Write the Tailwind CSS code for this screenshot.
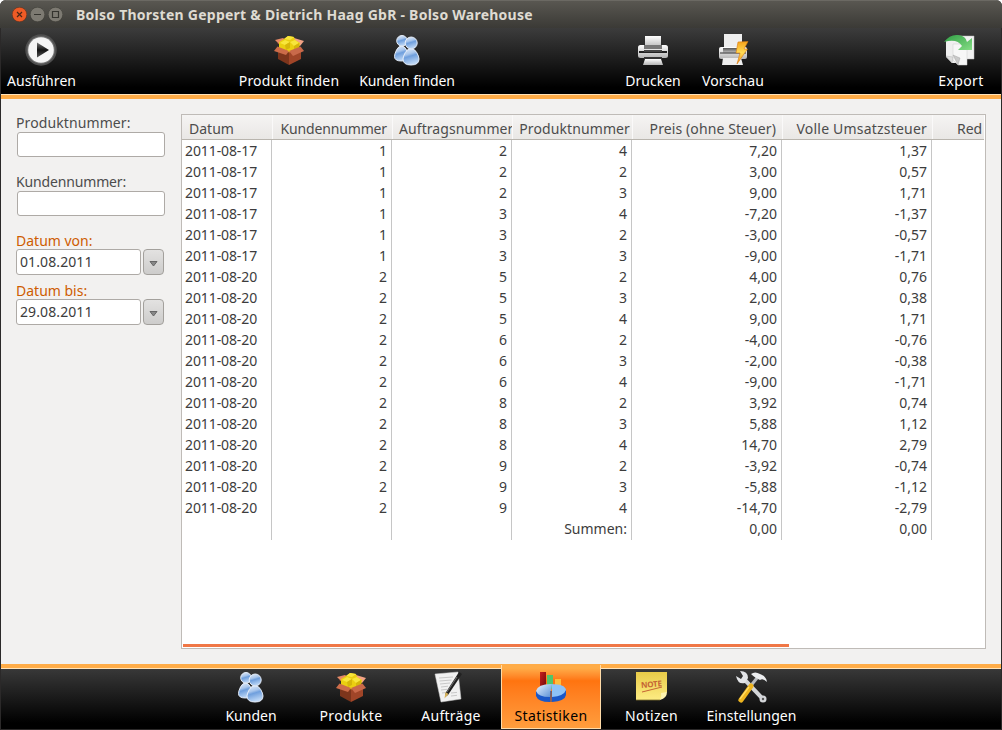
<!DOCTYPE html>
<html lang="de">
<head>
<meta charset="utf-8">
<title>Bolso Warehouse</title>
<script src="https://cdn.jsdelivr.net/npm/@tailwindcss/browser@4"></script>
</head>
<body class="bg-white overflow-hidden">
<svg class="absolute size-0" aria-hidden="true">
  <defs>
    <linearGradient id="blue" x1="0" y1="0" x2="1" y2="1"><stop offset="0" stop-color="#f4f9ff"/><stop offset=".45" stop-color="#a9c8ee"/><stop offset="1" stop-color="#5c92d6"/></linearGradient>
    <linearGradient id="ball" x1="0" y1="0" x2=".3" y2="1"><stop offset="0" stop-color="#e9f1fb"/><stop offset=".4" stop-color="#a9c6ec"/><stop offset=".55" stop-color="#6f9fdd"/><stop offset="1" stop-color="#bcd6f5"/></linearGradient>
    <linearGradient id="metal" x1="0" y1="0" x2="0" y2="1"><stop offset="0" stop-color="#ffffff"/><stop offset="1" stop-color="#b4b4b4"/></linearGradient>
    <linearGradient id="dark" x1="0" y1="0" x2="0" y2="1"><stop offset="0" stop-color="#555"/><stop offset=".5" stop-color="#999"/><stop offset="1" stop-color="#ddd"/></linearGradient>
    <linearGradient id="bolt" x1="0" y1="0" x2="0" y2="1"><stop offset="0" stop-color="#f5a21b"/><stop offset=".5" stop-color="#ffdc55"/><stop offset="1" stop-color="#ef8a12"/></linearGradient>
    <linearGradient id="green" x1="0" y1="0" x2="1" y2="1"><stop offset="0" stop-color="#2f9e44"/><stop offset="1" stop-color="#85dd85"/></linearGradient>
    <linearGradient id="note" x1="0" y1="0" x2="0" y2="1"><stop offset="0" stop-color="#e9cb48"/><stop offset="1" stop-color="#fdec83"/></linearGradient>
    <linearGradient id="play" x1="0" y1="0" x2="0" y2="1"><stop offset="0" stop-color="#777"/><stop offset=".5" stop-color="#111"/><stop offset="1" stop-color="#555"/></linearGradient>
    <linearGradient id="red" x1="0" y1="0" x2="1" y2="1"><stop offset="0" stop-color="#c81e1e"/><stop offset="1" stop-color="#6e0808"/></linearGradient>
    <symbol id="people" viewBox="0 0 32 32">
      <g fill="url(#ball)" stroke="#e6eefa" stroke-width="1">
        <path d="M10.500 12q-3 0-5 4t-2 6.500q0 4.500 7 4.500t7-4.500q0-2.500-2-6.500t-5-4"/><circle cx="11" cy="6.800" r="5.300"/>
        <path d="M20 14.500q-3.500 0-5.700 4t-2.300 6.500q0 6 8 6t8-6q0-2.500-2.300-6.500t-5.700-4"/><circle cx="20.200" cy="9" r="6"/>
      </g>
    </symbol>
    <symbol id="box" viewBox="0 0 32 32">
      <path d="M4 9 16 5 28 9 16 17Z" fill="#8e3c20"/>
      <path d="M21 4 31 7 27 12 19 7Z" fill="#f2a385"/><path d="M10 4 2 6 6 10 14 7Z" fill="#e58a67"/>
      <path d="M6 8 11 5 15 2 21 3 22 6 27 9 26 15 16 19 6 14Z" fill="#ebcf10"/>
      <path d="M11 5 15 2 21 3 17 6ZM7 9l5-3 5 2-5 3ZM17 8l5-2 4 3-5 3Z" fill="#f8e63c"/><path d="m12 11 5-3 0 6-4 2ZM21 12l5-3v5l-5 3Z" fill="#d6b60a"/>
      <path d="M5 14 16 18.500V31L5 25Z" fill="#7d351c"/><path d="M16 18.500 28 14V25L16 31Z" fill="#a04528"/>
      <path d="M4.500 12.500 16 17 13 21 1 17Z" fill="#cc6c49"/><path d="M27.500 12.500 16 17 20 22 31 17Z" fill="#c9694a"/>
    </symbol>
  </defs>
</svg>
<div id="app" class="w-[1002px] h-[730px] flex flex-col rounded-t-[6px] overflow-hidden bg-[#2b2929] px-px pb-px font-['Noto_Sans',sans-serif] text-[14px] leading-5 text-[#3c3c3c]">
  <header class="h-7 shrink-0 -mx-px px-3 flex items-center bg-linear-to-b from-[#595751] to-[#3b3a36] border-t border-[#6b6963]">
    <div class="flex gap-[3px] w-[64px]">
      <svg class="size-[15px]" viewBox="0 0 15 15"><circle cx="7.500" cy="7.500" r="7.300" fill="#ee5b26" stroke="#4a2a1c" stroke-width=".5"/><path d="m5 5 5 5m0-5-5 5" stroke="#4b2717" stroke-width="1.200"/></svg>
      <svg class="size-[15px]" viewBox="0 0 15 15"><circle cx="7.500" cy="7.500" r="7.300" fill="#7d7a72" stroke="#35342f" stroke-width=".5"/><path d="M4 7.500h7" stroke="#35342f" stroke-width="1.200"/></svg>
      <svg class="size-[15px]" viewBox="0 0 15 15"><circle cx="7.500" cy="7.500" r="7.300" fill="#7d7a72" stroke="#35342f" stroke-width=".5"/><path d="M4.500 4.500h6v6h-6z" fill="none" stroke="#35342f" stroke-width="1.200"/></svg>
    </div>
    <h1 class="font-bold text-[#dfdbd2] whitespace-nowrap tracking-[0.25px]">Bolso Thorsten Geppert &amp; Dietrich Haag GbR - Bolso Warehouse</h1>
  </header>

  <nav class="h-[66px] shrink-0 flex pt-1.5 bg-linear-to-b/srgb from-[#3c3c3c] to-black to-90% text-white whitespace-nowrap">
    <div class="w-[81px] flex flex-col items-center gap-[5px]">
      <svg class="size-8 -ml-0.5" viewBox="0 0 32 32"><circle cx="16" cy="16" r="15.700" fill="#505050"/><circle cx="16" cy="16" r="13.800" fill="#777"/><circle cx="16" cy="16" r="12.800" fill="#f4f4f4"/><path d="M12 8.500v15L24 16Z" fill="url(#play)"/></svg>
      <span class="tracking-[0.08px]">Ausführen</span>
    </div>
    <div class="w-[118px] ml-[148px] flex flex-col items-center gap-[5px]"><svg class="size-8 -ml-px"><use href="#box"/></svg><span class="tracking-[0.17px]">Produkt finden</span></div>
    <div class="w-[118px] flex flex-col items-center gap-[5px]"><svg class="size-8 -ml-px"><use href="#people"/></svg><span class="tracking-[-0.1px]">Kunden finden</span></div>
    <div class="w-20 ml-[147px] flex flex-col items-center gap-[5px]">
      <svg class="size-8 -ml-px" viewBox="0 0 32 32"><path d="M8 2h16v12H8z" fill="url(#metal)"/><rect x="1" y="11" width="30" height="13" rx="2.500" fill="url(#metal)"/><path d="M7 11h18v4H7z" fill="#777"/><path d="M2 18h28" stroke="#222" stroke-width="2"/><path d="M7 16h18v2H7z" fill="#444"/><path d="M7 23h18v2H7z" fill="#333"/><path d="M8 25h16l2 6H6Z" fill="url(#metal)"/></svg>
      <span>Drucken</span>
    </div>
    <div class="w-20 flex flex-col items-center gap-[5px]">
      <svg class="size-8" viewBox="0 0 32 32"><path d="M7 0h18v15H7z" fill="#eee"/><rect x="2" y="13" width="28" height="12" rx="2" fill="url(#metal)"/><path d="M6 14h19v6H6z" fill="url(#dark)"/><path d="M3 19h26" stroke="#333" stroke-width="1"/><path d="M6 24h18l2 7H5Z" fill="#eee"/><path d="M21 8 31 7.500 27 15h3.500L20 30l3-11h-4Z" fill="url(#bolt)" stroke="#d97b10" stroke-width=".6"/></svg>
      <span class="tracking-[0.12px]">Vorschau</span>
    </div>
    <div class="w-20 ml-auto flex flex-col items-center gap-[5px]">
      <svg class="size-8 -ml-1" viewBox="0 0 32 32"><path d="M13 2h18v23H19l-6-6Z" fill="#f2f2f2" stroke="#bbb" stroke-width=".5"/><path d="M3 6h14v23H9l-6-6Z" fill="#efefef"/><path d="M10 10h14v21H15l-5-5Z" fill="#f7f7f7" stroke="#ccc" stroke-width=".5"/><path d="m3 22 7 1-1 6Z" fill="#ddd" stroke="#aaa" stroke-width=".4"/><path d="m10 21 7 3-2 7Z" fill="#c9c9c9" stroke="#999" stroke-width=".4"/><path d="M1 8Q7 0 15 1q8 1 9 7l5-4v12H15l4-4Q14 4 1 8Z" fill="url(#green)"/></svg>
      <span class="tracking-[0.4px]">Export</span>
    </div>
  </nav>
  <div class="h-[5px] shrink-0 bg-[#ffac47] border-t border-[#ffe3b9]"></div>

  <main class="h-[565px] shrink-0 bg-[#f2f1f0] flex">
    <aside class="w-[180px] pl-[15px] pt-[14px] text-[#4c4c4c]">
      <div class="h-[59px]"><label class="block h-[19px] tracking-[0.1px]">Produktnummer:</label><div class="w-[148px] h-[25px] ml-px bg-white border border-[#aeaaa6] rounded-[3px]"></div></div>
      <div class="h-[59px]"><label class="block h-[19px] tracking-[-0.15px]">Kundennummer:</label><div class="w-[148px] h-[25px] ml-px bg-white border border-[#aeaaa6] rounded-[3px]"></div></div>
      <div class="h-[50px]"><label class="block h-[18px] text-[#ce5c00]">Datum von:</label>
        <div class="flex gap-0.5"><div class="w-[125px] h-[26px] pl-[3px] leading-[24px] bg-white border border-[#aeaaa6] rounded-[3px] text-[#3c3c3c] tracking-[0.1px]">01.08.2011</div><div class="w-[21px] h-[26px] flex items-center justify-center border border-[#a3a09c] rounded-[4px] bg-linear-to-b from-[#e3e2e1] to-[#cdcccb]"><svg class="w-[9px] h-[6px] mt-1" viewBox="0 0 9 6"><path d="M1 .5h7L4.500 5Z" fill="#888" stroke="#666"/></svg></div></div></div>
      <div class="h-[50px]"><label class="block h-[18px] text-[#ce5c00]">Datum bis:</label>
        <div class="flex gap-0.5"><div class="w-[125px] h-[26px] pl-[3px] leading-[24px] bg-white border border-[#aeaaa6] rounded-[3px] text-[#3c3c3c] tracking-[0.1px]">29.08.2011</div><div class="w-[21px] h-[26px] flex items-center justify-center border border-[#a3a09c] rounded-[4px] bg-linear-to-b from-[#e3e2e1] to-[#cdcccb]"><svg class="w-[9px] h-[6px] mt-1" viewBox="0 0 9 6"><path d="M1 .5h7L4.500 5Z" fill="#888" stroke="#666"/></svg></div></div></div>
    </aside>
    <section class="w-[805px] h-[535px] mt-[15px] bg-white border border-[#bfbbb7] flex flex-col overflow-hidden">
      <div class="h-[25px] shrink-0 flex mr-px bg-linear-to-b from-[#f5f4f3] to-[#e9e7e5] border-b border-[#b9b5ae] text-[#4c4c4c] leading-[27px] whitespace-nowrap text-right">
        <div class="w-[91px] shrink-0 border-r border-[#faf9f9] pl-[7px] text-left">Datum</div>
        <div class="w-[120px] shrink-0 border-r border-[#faf9f9] pr-[5px] tracking-[-0.15px]">Kundennummer</div>
        <div class="w-[120px] shrink-0 border-r border-[#faf9f9] pl-[6px] text-left overflow-hidden tracking-[0.08px]">Auftragsnummer</div>
        <div class="w-[120px] shrink-0 border-r border-[#faf9f9] pr-[2px] tracking-[0.1px]">Produktnummer</div>
        <div class="w-[150px] shrink-0 border-r border-[#faf9f9] pr-[6px] tracking-[0.1px]">Preis (ohne Steuer)</div>
        <div class="w-[150px] shrink-0 border-r border-[#faf9f9] pr-[5px] tracking-[0.2px]">Volle Umsatzsteuer</div>
        <div class="pl-[24px]">Red</div>
      </div>
      <div id="rows" class="h-[400px] shrink-0"></div>
      <div class="mt-auto mb-px ml-px w-[606px] h-[3px] bg-[#f07746]"></div>
    </section>
  </main>

  <div class="h-[5px] shrink-0 bg-[#ffac47] border-b border-[#ffe3b9]"></div>
  <footer class="h-[60px] shrink-0 flex pl-[200px] bg-linear-to-b/srgb from-[#383838] to-black to-90% text-white whitespace-nowrap">
    <div class="w-[100px] pt-0.5 flex flex-col items-center gap-[3px]"><svg class="size-8"><use href="#people"/></svg><span>Kunden</span></div>
    <div class="w-[100px] pt-0.5 flex flex-col items-center gap-[3px]"><svg class="size-8"><use href="#box"/></svg><span class="tracking-[0.35px]">Produkte</span></div>
    <div class="w-[100px] pt-0.5 flex flex-col items-center gap-[3px]">
      <svg class="size-8 -ml-1" viewBox="0 0 32 32"><path d="M2 3 25 1 28 28 8 31Z" fill="#f1f1f1" stroke="#ccc" stroke-width=".5"/><path d="m6 7 14-1M6.500 10l12-1M7 13l10-1M8 16l7-.8M8 19l6-.7M9 22l3-.4M18 22l6-.6M18 25l6-.7" stroke="#c8c8c8"/><path d="m26 1 3 2-14 21-3 2 .5-4Z" fill="#222"/><path d="m24 6-10 15" stroke="#888" stroke-width=".8"/><path d="m12.500 21 3 2-4 4.500Z" fill="#d9b45b"/></svg>
      <span class="tracking-[0.25px]">Aufträge</span></div>
    <div class="w-[100px] -mt-1 h-16 pt-1.5 flex flex-col items-center gap-[3px] border-x border-b border-[#ffdba8] bg-linear-to-b from-[#ffac47] from-5% via-[#ff740f] via-25% to-[#ff9d3c] text-black">
      <svg class="size-8" viewBox="0 0 32 32"><path d="M5 1h6v17H5z" fill="url(#red)"/><path d="M12 4h6v14h-6z" fill="#50c56b"/><path d="M20 8h6v8h-6z" fill="#ffbd3a"/><path d="M1 20v5q2 6 14 6v-6ZM17 25v6q13-1 14-7v-5Z" fill="#1b58c8"/><path d="M1 20q2-7 15-7v6l-1 7Q3 26 1 20Z" fill="url(#blue)"/><path d="M16 13q14 0 15 6-2 6-14 7V20Z" fill="#8dc2f7"/><path d="M16 20v11" stroke="#123b91"/></svg>
      <span class="tracking-[0.4px]">Statistiken</span></div>
    <div class="w-[100px] pt-0.5 flex flex-col items-center gap-[3px] pl-px">
      <svg class="size-8" viewBox="0 0 32 32"><path d="M0 1h31v20l-7 8H0z" fill="url(#note)"/><path d="M24 29q2-4 1-7l6-1q0 6-7 8" fill="#fff4b0"/><path d="M0 29h24" stroke="#7c6d2c" stroke-width=".8"/><text x="5" y="16" font-size="8" font-weight="bold" textLength="21" transform="rotate(-5 16 14)" fill="#c56434">NOTE</text><path d="m6 21 20-5" stroke="#c56434"/></svg>
      <span class="tracking-[0.3px]">Notizen</span></div>
    <div class="w-[100px] pt-0.5 flex flex-col items-center gap-[3px] pl-px">
      <svg class="size-8 -ml-0.5" viewBox="0 0 32 32"><path d="m8 7 20 21" stroke="#d3d5d8" stroke-width="4"/><circle cx="28" cy="28" r="3.500" fill="#d3d5d8"/><circle cx="28" cy="28" r="1.200" fill="#555"/><path d="M1 5 6 8 8 5 5 0q8 0 8 7l-3 5q-7 2-9-7" fill="#e3e5e8"/><path d="m22 7-8 10" stroke="#b9bcc0" stroke-width="3"/><path d="M16 3q4-3 9 0 6 2 7 8-4-4-7-2l-4-2q-3-2-5-4" fill="#eceef0"/><path d="M16 15 6 29" stroke="#eeb51f" stroke-width="5" stroke-linecap="round"/><path d="M14 16 5 28" stroke="#ffdc66" stroke-width="1.300"/></svg>
      <span class="tracking-[0.05px]">Einstellungen</span></div>
  </footer>
</div>
<script>
const rows = [
  ['2011-08-17','1','2','4','7,20','1,37'],['2011-08-17','1','2','2','3,00','0,57'],['2011-08-17','1','2','3','9,00','1,71'],
  ['2011-08-17','1','3','4','-7,20','-1,37'],['2011-08-17','1','3','2','-3,00','-0,57'],['2011-08-17','1','3','3','-9,00','-1,71'],
  ['2011-08-20','2','5','2','4,00','0,76'],['2011-08-20','2','5','3','2,00','0,38'],['2011-08-20','2','5','4','9,00','1,71'],
  ['2011-08-20','2','6','2','-4,00','-0,76'],['2011-08-20','2','6','3','-2,00','-0,38'],['2011-08-20','2','6','4','-9,00','-1,71'],
  ['2011-08-20','2','8','2','3,92','0,74'],['2011-08-20','2','8','3','5,88','1,12'],['2011-08-20','2','8','4','14,70','2,79'],
  ['2011-08-20','2','9','2','-3,92','-0,74'],['2011-08-20','2','9','3','-5,88','-1,12'],['2011-08-20','2','9','4','-14,70','-2,79'],
  ['','','','Summen:','0,00','0,00']
];
const cols = ['w-[90px] pl-[3px] text-left tracking-[-0.1px]','w-[120px] pr-1 text-right','w-[120px] pr-1 text-right','w-[120px] pr-1 text-right','w-[150px] pr-1 text-right','w-[150px] pr-1 text-right'];
document.getElementById('rows').innerHTML = rows.map((r, n) =>
  `<div class="flex ${n === rows.length - 1 ? 'h-[22px]' : 'h-[21px]'} leading-[21px]">` + r.map((v, i) => `<div class="${cols[i]} shrink-0 border-r border-[#c6c6c6]">${v}</div>`).join('') + '</div>').join('');
</script>
</body>
</html>
